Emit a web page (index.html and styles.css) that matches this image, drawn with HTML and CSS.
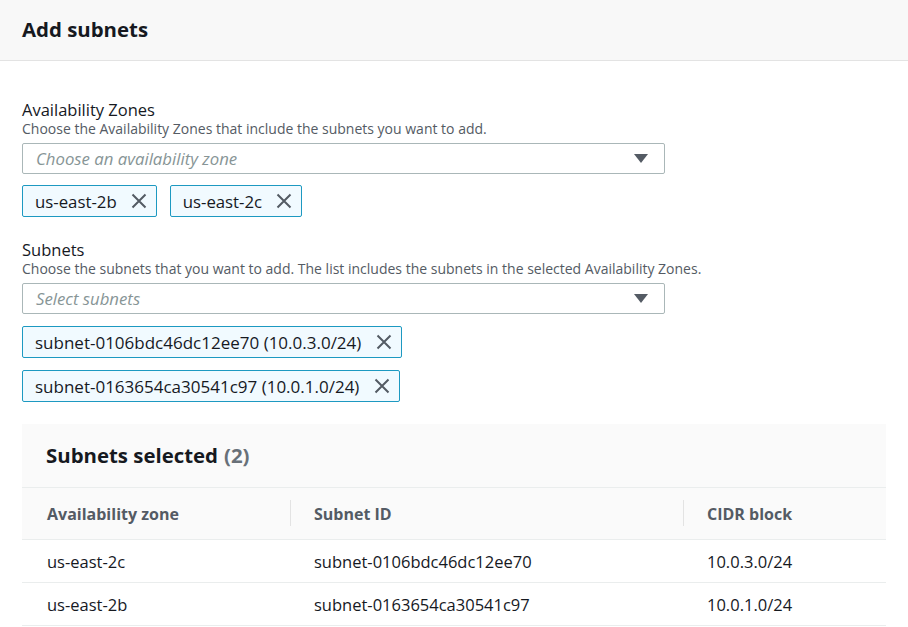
FILE: index.html
```html
<!DOCTYPE html>
<html>
<head>
<meta charset="utf-8">
<link rel="stylesheet" href="styles.css">
</head>
<body>
<div class="page">
  <header class="header"><h1>Add subnets</h1></header>
  <main class="content">
    <section class="field">
      <div class="label">Availability Zones</div>
      <div class="desc">Choose the Availability Zones that include the subnets you want to add.</div>
      <div class="select"><span class="placeholder">Choose an availability zone</span><span class="caret"></span></div>
      <div class="tokens row">
        <div class="token">us-east-2b<svg class="x" viewBox="0 0 16 16"><path d="M1.5 1.5L14.5 14.5M14.5 1.5L1.5 14.5"/></svg></div>
        <div class="token">us-east-2c<svg class="x" viewBox="0 0 16 16"><path d="M1.5 1.5L14.5 14.5M14.5 1.5L1.5 14.5"/></svg></div>
      </div>
    </section>
    <section class="field">
      <div class="label">Subnets</div>
      <div class="desc">Choose the subnets that you want to add. The list includes the subnets in the selected Availability Zones.</div>
      <div class="select"><span class="placeholder">Select subnets</span><span class="caret"></span></div>
      <div class="tokens col">
        <div class="token wide">subnet-0106bdc46dc12ee70 (10.0.3.0/24)<svg class="x" viewBox="0 0 16 16"><path d="M1.5 1.5L14.5 14.5M14.5 1.5L1.5 14.5"/></svg></div>
        <div class="token wide">subnet-0163654ca30541c97 (10.0.1.0/24)<svg class="x" viewBox="0 0 16 16"><path d="M1.5 1.5L14.5 14.5M14.5 1.5L1.5 14.5"/></svg></div>
      </div>
    </section>
    <section class="table">
      <div class="table-title">Subnets selected <span class="count">(2)</span></div>
      <div class="grid">
        <div class="th c1">Availability zone</div>
        <div class="th c2">Subnet ID</div>
        <div class="th c3">CIDR block</div>
        <div class="td">us-east-2c</div>
        <div class="td">subnet-0106bdc46dc12ee70</div>
        <div class="td">10.0.3.0/24</div>
        <div class="td">us-east-2b</div>
        <div class="td">subnet-0163654ca30541c97</div>
        <div class="td">10.0.1.0/24</div>
      </div>
    </section>
  </main>
</div>
</body>
</html>
```
FILE: styles.css
```css
* { box-sizing: border-box; }
html, body { margin: 0; padding: 0; background: #fff; }
body { font-family: "Open Sans", "Noto Sans", sans-serif; color: #16191f; }
.page { width: 908px; height: 627px; overflow: hidden; }
.header {
  height: 61px;
  background: #f8f8f8;
  border-bottom: 1px solid #e3e3e3;
  padding: 0 22px 3px 22px;
  display: flex;
  align-items: center;
}
.header h1 { margin: 0; font-size: 20.4px; font-weight: 700; }
.content { padding: 39px 22px 0 22px; }
.field + .field { margin-top: 23px; }
.label { font-size: 16.5px; line-height: 20px; }
.desc { font-size: 14px; line-height: 18px; color: #545b64; margin-bottom: 5px; }
.select {
  width: 643px;
  height: 31px;
  border: 1px solid #aab7b8;
  border-radius: 2px;
  display: flex;
  align-items: center;
  justify-content: space-between;
  padding: 0 16px 0 13px;
}
.placeholder { font-style: italic; color: #879596; font-size: 16.75px; }
.caret {
  width: 0; height: 0;
  border-left: 7px solid transparent;
  border-right: 7px solid transparent;
  border-top: 9px solid #545b64;
}
.tokens { display: flex; margin-top: 11px; }
.tokens.row { gap: 13px; }
.tokens.col { flex-direction: column; align-items: flex-start; gap: 12px; margin-top: 12px; }
.token {
  height: 32px;
  display: flex;
  align-items: center;
  gap: 14px;
  padding: 0 9px 0 12px;
  background: #f1faff;
  border: 1px solid #1d99c1;
  border-radius: 2px;
  font-size: 16.8px;
}
.token.wide { font-size: 17px; gap: 15px; }
.x { width: 16px; height: 16px; }
.x path { stroke: #545b64; stroke-width: 2; fill: none; }
.table {
  width: 864px;
  margin-top: 22px;
  background: #fafafa;
}
.table-title {
  height: 64px;
  padding: 0 24px 2px 24px;
  display: flex;
  align-items: center;
  font-size: 20.4px;
  font-weight: 700;
  gap: 6px;
  border-bottom: 1px solid #eaeded;
}
.count { color: #687078; font-weight: 700; }
.grid {
  display: grid;
  grid-template-columns: 268px 393px 203px;
}
.th {
  height: 52px;
  display: flex;
  align-items: center;
  padding-left: 25px;
  font-size: 16px;
  font-weight: 700;
  color: #545b64;
  border-bottom: 1px solid #eaeded;
  position: relative;
}
.th.c2, .th.c3 { padding-left: 24px; }
.th.c2::before, .th.c3::before {
  content: "";
  position: absolute;
  left: 0; top: 12px; bottom: 13px;
  border-left: 1px solid #e3e3e3;
}
.td {
  height: 43px;
  background: #fff;
  display: flex;
  align-items: center;
  padding-left: 25px;
  font-size: 16.5px;
  border-bottom: 1px solid #eaeded;
}
.td:nth-child(3n+2), .td:nth-child(3n) { padding-left: 24px; }
```
